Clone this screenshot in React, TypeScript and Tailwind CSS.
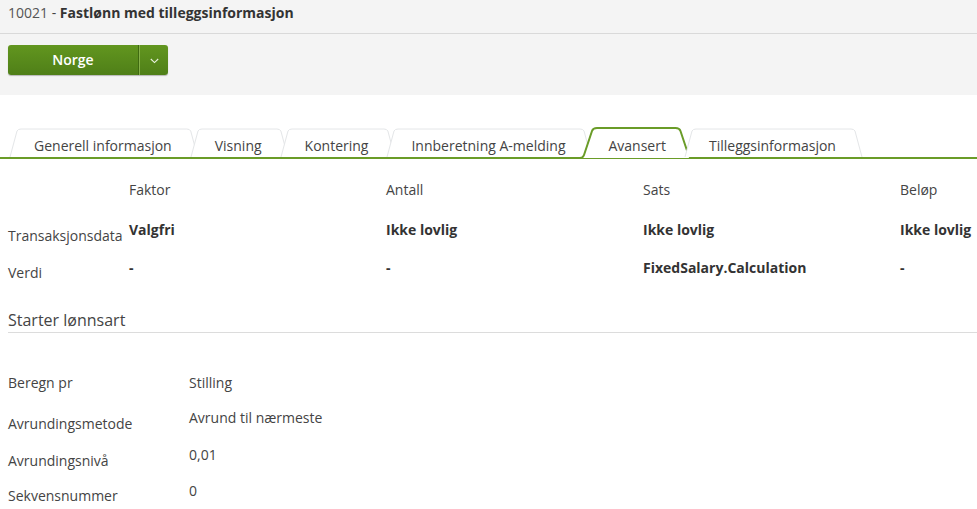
import React from "react";

const GREEN = "#6a9c28";

function Tab({ label, active }: { label: string; active?: boolean }) {
  return (
    <div className="relative h-[29px] pl-[22px] pr-[21px] pt-[8px] text-[14px] leading-[20px] text-[#444]">
      <TabShape active={active} />
      <span className="relative">{label}</span>
    </div>
  );
}

function TabShape({ active }: { active?: boolean }) {
  const ref = React.useRef<HTMLDivElement>(null);
  const [w, setW] = React.useState(0);
  React.useLayoutEffect(() => {
    if (ref.current && ref.current.parentElement) {
      setW(ref.current.parentElement.getBoundingClientRect().width);
    }
  }, []);
  return (
    <div ref={ref} className="absolute inset-0">
      {w > 0 &&
        (active ? (
          <svg
            className="absolute overflow-visible"
            style={{ left: -14, top: -1 }}
            width={w + 28}
            height={32}
          >
            <path
              d={`M 0 31 L 8 31 Q 11 31 12 28 L 20 4 Q 21 1 25 1 L ${w + 3} 1 Q ${w + 7} 1 ${w + 8} 4 L ${w + 16} 28 Q ${w + 17} 31 ${w + 20} 31 L ${w + 28} 31`}
              fill="#ffffff"
              stroke={GREEN}
              strokeWidth={2}
            />
          </svg>
        ) : (
          <svg
            className="absolute top-0 left-0 overflow-visible"
            width={w}
            height={29}
          >
            <path
              d={`M -2 29 L 5 3 Q 6 1 9 1 L ${w - 6} 1 Q ${w - 3} 1 ${w - 2} 3 L ${w + 5} 29`}
              fill="#ffffff"
              stroke="#e4e6e8"
              strokeWidth={1}
            />
          </svg>
        ))}
    </div>
  );
}

export default function App() {
  const font = { fontFamily: '"Open Sans", "Noto Sans", sans-serif' };
  return (
    <div className="w-[977px] h-[509px] overflow-hidden bg-white text-[#444]" style={font}>
      {/* header */}
      <div className="h-[34px] bg-[#f4f4f4] border-b border-[#d9d9d9] px-2 pt-[3px] flex items-start text-[14px] leading-[20px]">
        <span className="text-[#555]">10021</span>
        <span className="text-[#444]">&nbsp;-&nbsp;</span>
        <span className="font-bold text-[#333]">Fastlønn med tilleggsinformasjon</span>
      </div>
      {/* toolbar */}
      <div className="h-[61px] bg-[#f4f4f4] px-2 pt-[11px]">
        <div className="flex h-[30px] w-[160px] rounded-[3px] overflow-hidden bg-gradient-to-b from-[#62961f] to-[#4f7f18] shadow-[0_1px_1px_rgba(0,0,0,0.25)]">
          <div className="w-[130px] flex items-center justify-center text-white font-semibold text-[14px] pb-[1px]">
            Norge
          </div>
          <div className="w-[1px] bg-[#3f6a10]" />
          <div className="w-[1px] bg-[#86b24a]" />
          <div className="flex-1 flex items-center justify-center">
            <svg width="9" height="6" viewBox="0 0 9 6" className="mt-[2px]">
              <path d="M0.8 1 L4.5 4.6 L8.2 1" fill="none" stroke="#e9f1de" strokeWidth="1.1" />
            </svg>
          </div>
        </div>
      </div>
      {/* tabs */}
      <div className="mt-[33px] border-b-2 border-[#6a9c28] h-[31px] flex pl-[12px]">
        <Tab label="Generell informasjon" />
        <Tab label="Visning" />
        <Tab label="Kontering" />
        <Tab label="Innberetning A-melding" />
        <Tab label="Avansert" active />
        <Tab label="Tilleggsinformasjon" />
      </div>
      {/* table */}
      <div className="pl-2 mt-[21px] text-[14px] leading-[20px]">
        <div className="grid grid-cols-[121px_257px_257px_257px_257px] w-[1149px]">
          <div />
          <div>Faktor</div>
          <div>Antall</div>
          <div>Sats</div>
          <div>Beløp</div>
        </div>
        <div className="grid grid-cols-[121px_257px_257px_257px_257px] w-[1149px] mt-[20px] h-[38px]">
          <div className="pt-[6px]">Transaksjonsdata</div>
          <div className="font-bold text-[#333]">Valgfri</div>
          <div className="font-bold text-[#333]">Ikke lovlig</div>
          <div className="font-bold text-[#333]">Ikke lovlig</div>
          <div className="font-bold text-[#333]">Ikke lovlig</div>
        </div>
        <div className="grid grid-cols-[121px_257px_257px_257px_257px] w-[1149px]">
          <div className="pt-[5px]">Verdi</div>
          <div className="font-bold text-[#333]">-</div>
          <div className="font-bold text-[#333]">-</div>
          <div className="font-bold text-[#333]">FixedSalary.Calculation</div>
          <div className="font-bold text-[#333]">-</div>
        </div>
      </div>
      {/* section */}
      <div className="ml-2 mt-[26px] border-b border-[#dcdcdc] text-[16px] leading-[22px] pb-[1px] text-[#444]">
        Starter lønnsart
      </div>
      <div className="pl-2 mt-[40px] text-[14px] leading-[20px]">
        <div className="grid grid-cols-[181px_1fr] h-[35px]">
          <div>Beregn pr</div>
          <div>Stilling</div>
        </div>
        <div className="grid grid-cols-[181px_1fr] h-[37px]">
          <div className="pt-[6px]">Avrundingsmetode</div>
          <div>Avrund til nærmeste</div>
        </div>
        <div className="grid grid-cols-[181px_1fr] h-[36px]">
          <div className="pt-[6px]">Avrundingsnivå</div>
          <div>0,01</div>
        </div>
        <div className="grid grid-cols-[181px_1fr] h-[36px]">
          <div className="pt-[5px]">Sekvensnummer</div>
          <div>0</div>
        </div>
      </div>
    </div>
  );
}
